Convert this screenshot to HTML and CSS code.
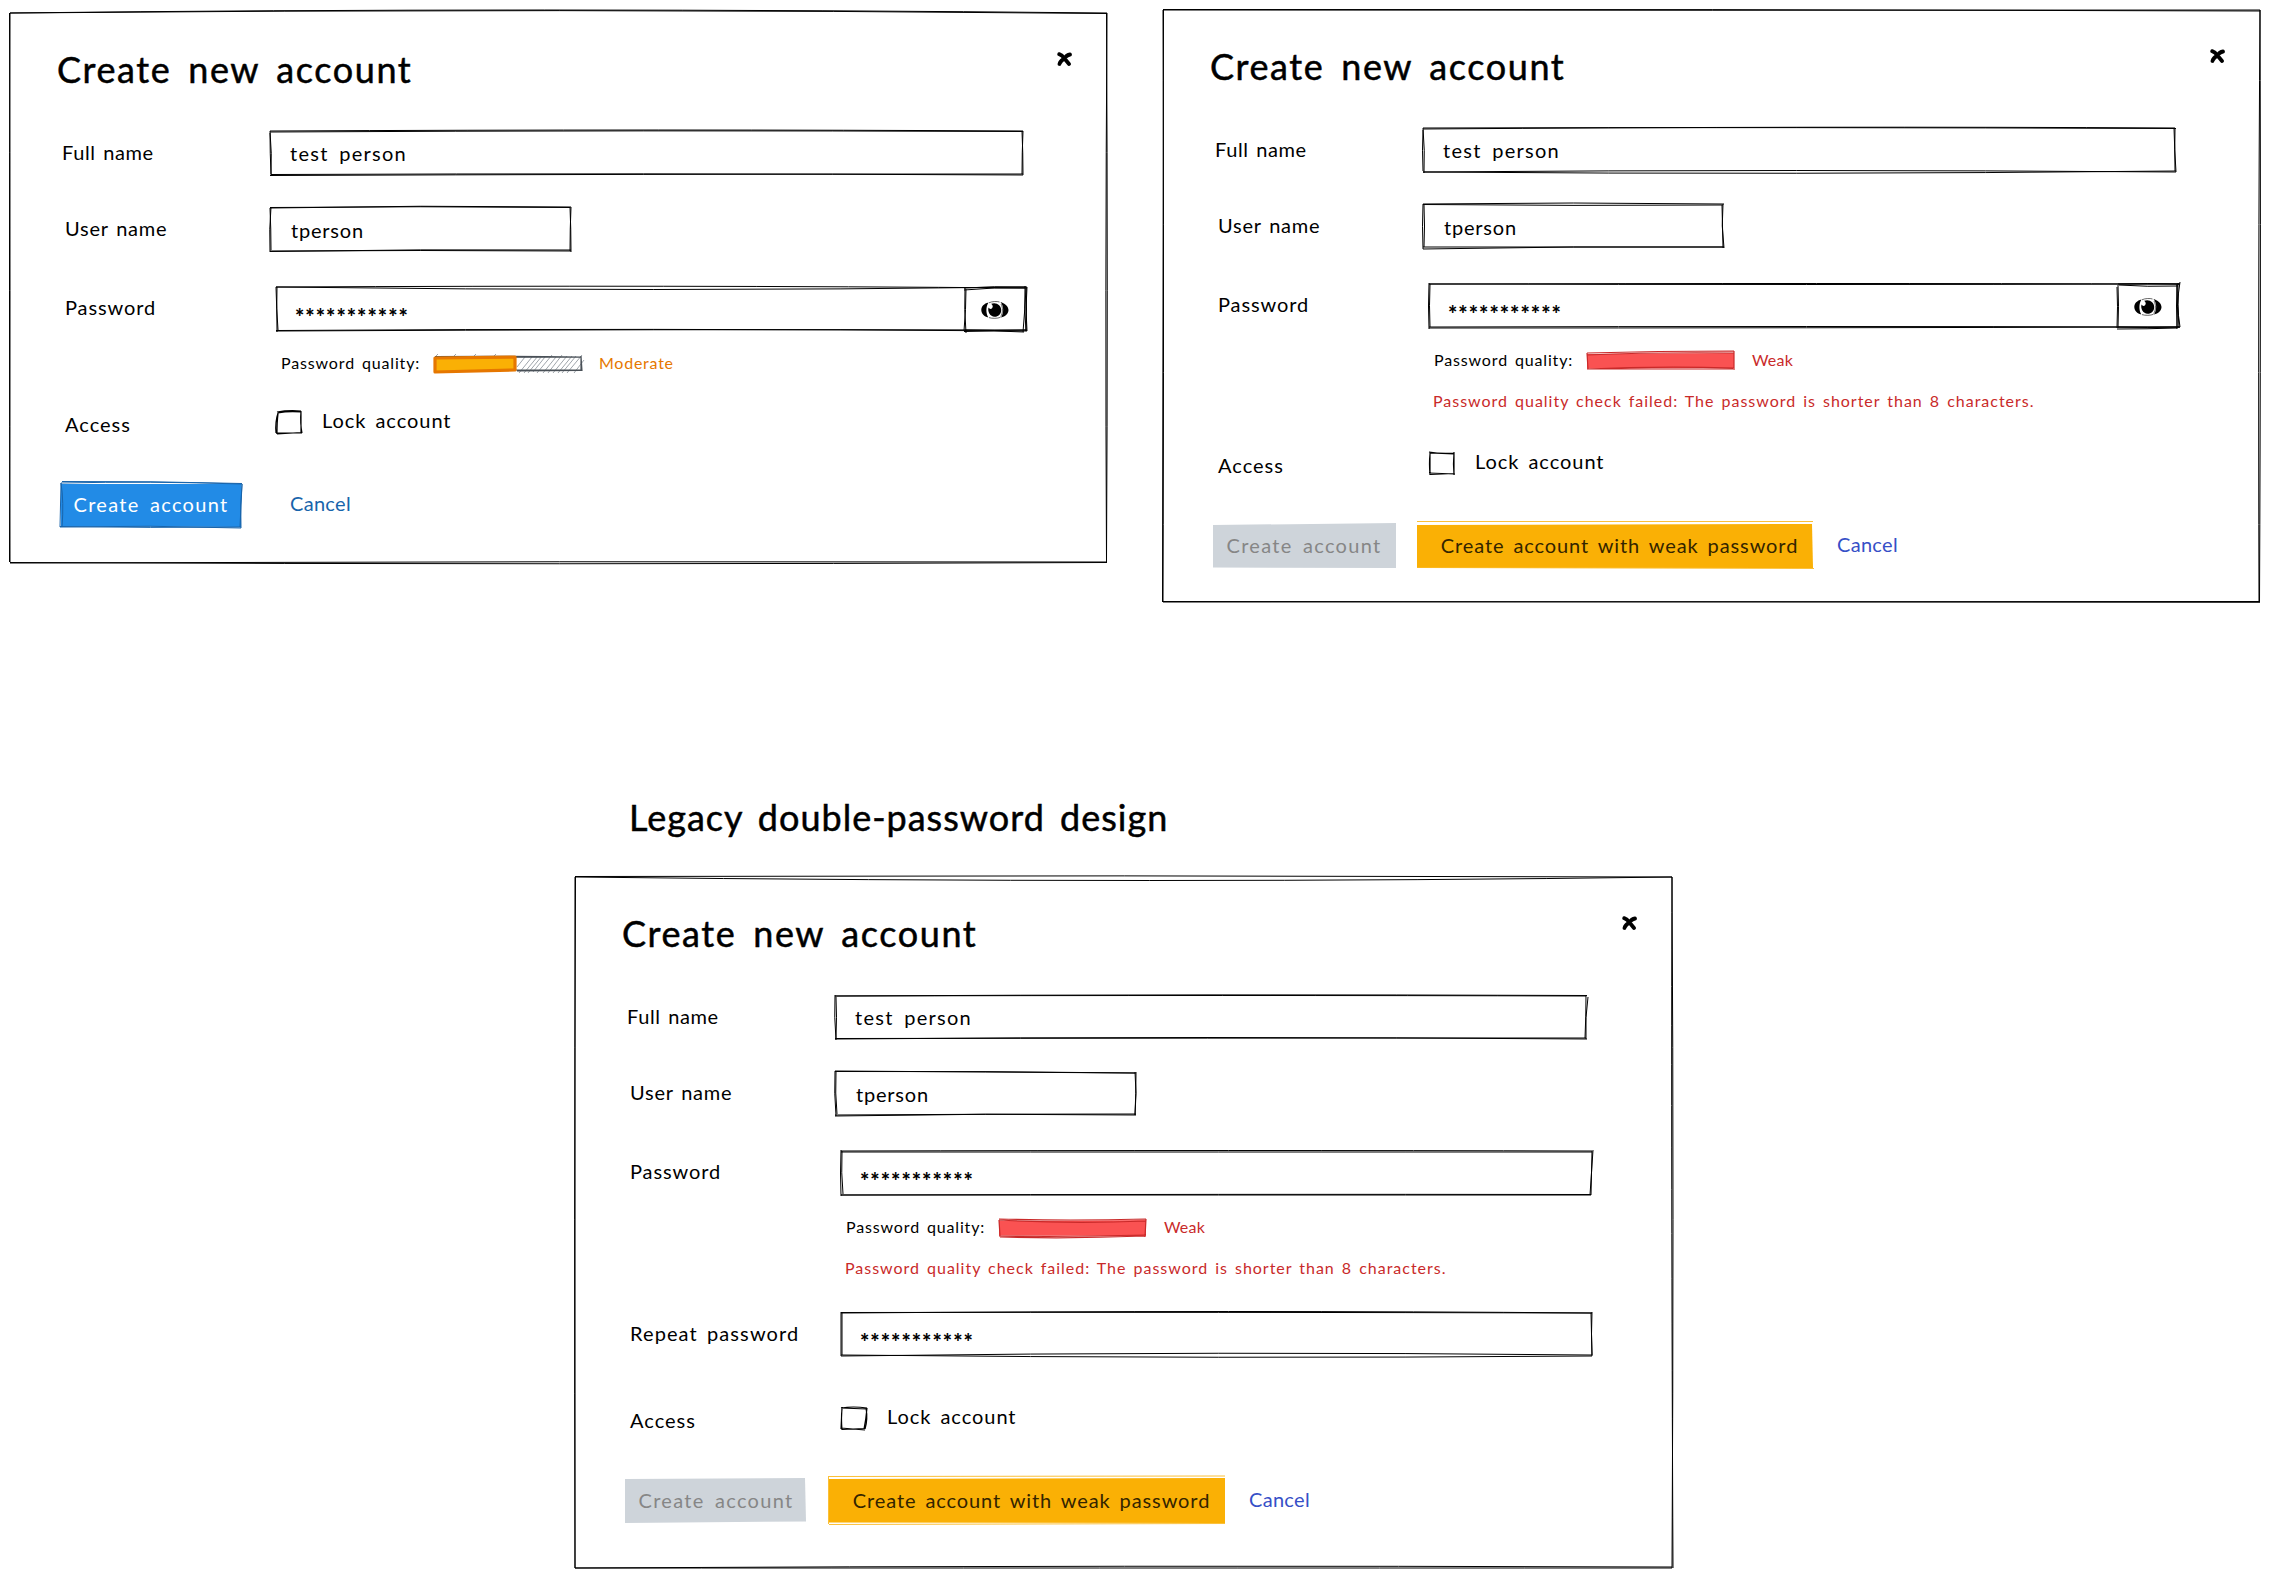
FILE: index.html
```html
<!DOCTYPE html>
<html lang="en">
<head>
<meta charset="utf-8">
<title>Create new account – wireframes</title>
<link rel="stylesheet" href="styles.css">
</head>
<body>
<svg class="defs" aria-hidden="true">
  <symbol id="eye" viewBox="0 0 28 18">
    <path d="M7.5 1.500C3 2.500 .3 5.500 .3 9s2.900 6.600 7 7.400C4.800 12.500 4.700 5.500 7.500 1.500Z"/>
    <path d="M19.500 1c3.800 1 8 4.300 8 8s-3.200 6.600-7.500 7.500c3-4.500 3-11.500-.5-15.500Z"/>
    <path d="M7.500 6.500C8.500 8 10 8.500 11.200 7c1.200-1.600.3-3-1-4.200C15 .8 20.300 4 20.200 9.300c0 4.200-3.400 6.700-6.700 6.500C9.300 15.500 6.300 11 7.500 6.500Z"/>
    <path class="thin" d="M8 1.800C11 .3 16 .2 18.500 1M8 16.600c3 1 8.500 1 11.500-.3M20 3c2 3.500 2 9-.3 12.500"/>
  </symbol>
  <symbol id="cross" viewBox="0 0 15 14">
    <path class="bold" d="M2.200 2.200Q5 3 7.500 6.500L12 12M13 2.500Q9.500 3 7.500 6.500Q3 9 2.500 12"/>
  </symbol>
</svg>
<main class="board">
  <div class="pair">
    <section class="dialog dialog-ok">
      <svg class="ink"><path d="M0 0Q550-5 1097 .5M0 0Q520-6 1097 0M1097 0Q1095 280 1096.500 549M1096.500 0Q1098 280 1096.500 549M1097 549Q550 548 0 550M1097 549.500Q550 552 0 549.500M0 549Q-1 280 0 0M-.5 549Q.5 280-.5 0"/></svg>
      <header class="head"><h1>Create new account</h1><svg class="close"><use href="#cross"/></svg></header>
      <div class="row"><span class="label full">Full name</span><div class="field"><svg class="ink"><path d="M0 0Q400-2 753 0M0 1Q370-1 753 .5M752 0Q753 22 753 44M753 0Q752 22 752 43M753 44Q370 42 1 43.500M753 43Q370 43 0 44.500M1 45Q2 22 0 0M1 43Q0 22 0 2"/></svg><span class="value person">test person</span></div></div>
      <div class="row user"><span class="label uname">User name</span><div class="field short"><svg class="ink"><path d="M0 1Q150-2 301 0M0 .5Q150-1 300 .5M300 0Q301 22 301 45M301 0Q300 22 300 44M301 43Q150 42 0 44.500M301 44Q150 43 0 44M0 45Q-1 22 1 0M1 43Q1 22 0 1"/></svg><span class="value tperson">tperson</span></div></div>
      <div class="row pass"><span class="label pword">Password</span><div class="field secret"><svg class="ink"><path d="M0 0Q400-2 751 1M0 0Q380 5 751 0M750 0Q751 22 750 44M751 0Q749 22 751 44M751 44Q380 41 0 43.500M751 43Q380 42 0 44M1 45Q1 22 0 0M2 43Q0 22 1 0"/></svg><span class="value stars">***********</span><span class="reveal"><svg class="ink"><path d="M0 1Q30-1 62 0M0 3Q30 0 61 1M61-1Q60 22 62 44M62 1Q61 22 59 45M62 43Q30 44 1 43M60 45Q30 43 0 44.500M2 46Q0 22 1 1M0 44Q2 22 2 2"/></svg><svg class="eye"><use href="#eye"/></svg></span></div></div>
      <div class="quality moderate"><span class="qlabel">Password quality:</span><span class="meter"><svg class="ink"><g class="hatch"><path d="M83 11l8-10M85 17l13-16M90 17l14-17M94 17l14-17M99 16l12-15M103 17l15-18M109 17l13-16M114 17l14-18M119 17l14-17M124 17l14-17M128 17l14-17M133 17l15-18M140 17l10-13M2 0l2-2M20 0l2-2M40 0l2-2M60 0l2-2"/></g><path class="slate" d="M1 .5Q80 0 147 1M82 1.500L147 1M147 0L148 15M147 1L147 15M148 14.500L83 15M147 14L80 14"/><path class="amber" d="M1 2L81 1L81 14L1 16Z"/></svg></span><span class="verdict">Moderate</span></div>
      <div class="row access"><span class="label acc">Access</span><label class="check"><span class="box"><svg class="ink"><path d="M1 1Q12-1 25 0M2 2Q12 0 25 1M25 0Q24 12 26 22M25 1Q25 12 25 22M26 22L0 22M25 21.500L1 23M0 22Q-1 11 2 2M1 23Q1 11 2 3"/></svg></span><span class="lock">Lock account</span></label></div>
      <div class="actions"><button class="btn create"><svg class="ink"><path class="fill" d="M1 2L181 2L181 45L1 44Z"/><path d="M2-.5Q90-1 182 1.500M1 1Q90-1 182 2M182 2Q180 22 181 46M182 2L180 45M181 46Q90 43 0 45M181 45Q90 46 0 44.500M2 45Q4 20 1 1M0 45L1 1"/></svg><span>Create account</span></button><a class="cancel">Cancel</a></div>
    </section>
    <section class="dialog dialog-weak">
      <svg class="ink"><path d="M0-.5Q550-1 1097 1M0 0Q550 .5 1097 0M1097 0Q1095 280 1096 592M1097 0Q1098 280 1096.500 592M1097 591.500L0 592M1097 592.300L0 591.500M0 592Q1 280 0 0M-.5 592L.500 0"/></svg>
      <header class="head"><h1>Create new account</h1><svg class="close"><use href="#cross"/></svg></header>
      <div class="row"><span class="label full">Full name</span><div class="field"><svg class="ink"><path d="M0 1Q400-2 752 0M0 0Q370-1 753 .5M752 0Q751 22 753 44M751 0Q752 22 752 43M753 44Q370 41 0 44M753 43Q370 47 0 44M1 45Q2 22 0 0M0 43Q-1 22 0 2"/></svg><span class="value person">test person</span></div></div>
      <div class="row user"><span class="label uname">User name</span><div class="field short"><svg class="ink"><path d="M0 0Q150-2 301 0M0 .5Q150 2 300 1M300 0Q298 22 301 44M299 1L300 44M301 43Q150 43 0 43M301 43Q150 42 0 45M0 45Q-1 22 0 0M1 43Q2 22 1 1"/></svg><span class="value tperson">tperson</span></div></div>
      <div class="row pass"><span class="label pword">Password</span><div class="field secret"><svg class="ink"><path d="M0 0Q400-1 751 0M0 0Q380 1 751 0M748 0Q747 22 748 44M751-2Q747 20 751 43M751 43Q380 42 0 43M751 43Q380 44 0 44M0 45Q-1 22 0-1M1 43Q0 22 1 0"/></svg><span class="value stars">***********</span><span class="reveal"><svg class="ink"><path d="M1 0Q30-1 62 0M2 1Q30 3 61 2M61-1Q60 22 62 44M60 1Q61 22 60 45M62 43Q30 44 1 43M60 44Q30 45 0 45M0 44Q1 22 0 3M1 44Q2 22 1 1"/></svg><svg class="eye"><use href="#eye"/></svg></span></div></div>
      <div class="quality weak"><span class="qlabel">Password quality:</span><span class="meter"><svg class="ink"><path class="red" d="M0 1L147 0L147 15L0 15.500Z"/><path class="redline" d="M0 0Q70-2 147-2M0 2Q70-1 147 0M147-2L147 17M0 0L1 16M0 16Q70 13 147 15M1 16L146 16"/></svg></span><span class="verdict">Weak</span></div>
      <p class="error">Password quality check failed: The password is shorter than 8 characters.</p>
      <div class="row access"><span class="label acc">Access</span><label class="check"><span class="box"><svg class="ink"><path d="M0 0Q12 2 25 1M1 1L25 2M25 0Q24 12 25 23M25 1L25 22M26 22L0 21M25 21.500L1 22.500M1 23Q0 11 1 2M1 22L1 0"/></svg></span><span class="lock">Lock account</span></label></div>
      <div class="actions"><button class="btn create off"><svg class="ink"><path class="fill" d="M0 2L183 0L183 45L0 44.500Z"/></svg><span>Create account</span></button><button class="btn risky"><svg class="ink"><path class="fill" d="M0 2L395 1L396 45L0 44.500Z"/><path class="gold" d="M0-1.500L396-1.500M0 44.500L397 45.500"/></svg><span>Create account with weak password</span></button><a class="cancel">Cancel</a></div>
    </section>
  </div>
  <div class="legacy">
    <h2>Legacy double-password design</h2>
    <section class="dialog dialog-legacy">
      <svg class="ink"><path d="M0-.5Q550-2 1097 0M0 0Q600 7 1097 0M1097 0Q1096 280 1098 691M1097 0Q1099 340 1097 691M1097 690Q550 688 0 691M1097 691Q500 691 0 691M0 691Q-1 340 .5 0M0 691L0 0"/></svg>
      <header class="head"><h1>Create new account</h1><svg class="close"><use href="#cross"/></svg></header>
      <div class="row"><span class="label full">Full name</span><div class="field"><svg class="ink"><path d="M0 1Q400 0 751 1M0 1Q370-1 752 .5M753 2Q750 22 751 44M751 0Q751 22 750 43M752 44Q370 41 0 44M751 43Q370 43 0 43.500M1 45Q-1 22 0 0M1 43Q2 22 1 2"/></svg><span class="value person">test person</span></div></div>
      <div class="row user"><span class="label uname">User name</span><div class="field short"><svg class="ink"><path d="M0 0Q150 1 301 2M0 .5Q150 0 300 2M301 1Q301 22 300 44M300 1Q302 22 300 44M301 43Q150 43 0 44M301 44Q150 42 0 45M1 45Q-1 22 0 0M2 43Q0 22 1 1"/></svg><span class="value tperson">tperson</span></div></div>
      <div class="row pass"><span class="label pword">Password</span><div class="field secret"><svg class="ink"><path d="M0 0Q400-1 751 0M0 1Q380 1 751 1M752-1L749 44M751 0L750 44M750 43.500Q380 43 0 44M750 44Q380 44 0 44M0 45Q-1 22 0-1M2 43Q0 22 1 0"/></svg><span class="value stars">***********</span></div></div>
      <div class="quality weak"><span class="qlabel">Password quality:</span><span class="meter"><svg class="ink"><path class="red" d="M0 1L147 0L147 16L0 15.500Z"/><path class="redline" d="M0-1Q70 1 147-1M0 0Q70 4 147 1M147-1L146 17M0 0L1 16M0 16Q70 17 147 15M1 17Q70 19 146 16"/></svg></span><span class="verdict">Weak</span></div>
      <p class="error">Password quality check failed: The password is shorter than 8 characters.</p>
      <div class="row repeat"><span class="label rep">Repeat password</span><div class="field secret"><svg class="ink"><path d="M0 1Q400-2 751 1M0 .5Q380 0 751 1M751 0Q750 22 751 44M750 1L751 43M751 43Q380 39 0 44M751 44Q380 47 0 43M0 44L0 0M1 43L1 1"/></svg><span class="value stars">***********</span></div></div>
      <div class="row access"><span class="label acc">Access</span><label class="check"><span class="box"><svg class="ink"><path d="M0 1Q12-1 26 1M0 1L26 2M26 1Q25 12 23 22M25 1Q27 12 24 22M24 23L0 21M23 21.500L1 22.500M1 23Q0 11 1 2M0 22L1 0"/></svg></span><span class="lock">Lock account</span></label></div>
      <div class="actions"><button class="btn create off"><svg class="ink"><path class="fill" d="M0 1L180 0L181 43.500L0 45Z"/></svg><span>Create account</span></button><button class="btn risky"><svg class="ink"><path class="fill" d="M0 1L396 0L396 45L0 44.500Z"/><path class="gold" d="M-1-1.500L396-2M0 46.500L396 45.500M-.5-1L-.5 46"/></svg><span>Create account with weak password</span></button><a class="cancel">Cancel</a></div>
    </section>
  </div>
</main>
</body>
</html>
```

FILE: styles.css
```css
* { box-sizing: border-box; }
body {
  margin: 0;
  width: 2270px;
  height: 1578px;
  background: #fff;
  color: #000;
  font: 20px/42px Lato, "Open Sans", sans-serif;
  overflow: hidden;
}
.defs { position: absolute; width: 0; height: 0; }
.board { display: flex; flex-direction: column; height: 100%; }
.pair { display: flex; gap: 56px; height: 798px; padding: 10px 0 0 10px; align-items: flex-start; }
.dialog { position: relative; width: 1097px; flex: none; }
.dialog-ok { margin-top: 3px; height: 549px; }
.dialog-weak { height: 592px; }
.dialog-legacy { height: 691px; }
.legacy { padding-left: 575px; }

/* Hand-drawn outline laid over its box */
.ink { position: absolute; inset: 0; width: 100%; height: 100%; overflow: visible; fill: none; stroke: #000; stroke-width: 1px; pointer-events: none; }

h1, h2 { margin: 0; font-size: 36px; font-weight: 400; letter-spacing: 1.6px; word-spacing: 6px; -webkit-text-stroke: .5px; white-space: nowrap; }
h2 { height: 79px; line-height: 42px; padding: 0 0 0 54px; margin-top: -2px; margin-bottom: 2px; letter-spacing: 1px; word-spacing: 5px; }
.head { display: flex; justify-content: space-between; height: 118px; padding: 36px 35px 0 47px; }
.head h1 { line-height: 40px; }
.close { width: 15px; height: 14px; margin-top: 3px; overflow: visible; }
.bold { fill: none; stroke: #000; stroke-width: 3.8px; stroke-linecap: round; }
.thin { fill: none; stroke: #000; stroke-width: .6px; }

.row { display: flex; height: 44px; }
.user { margin-top: 32px; }
.pass { margin-top: 36px; }
.label { width: 260px; padding-left: 52px; line-height: 42px; letter-spacing: .6px; word-spacing: 2px; white-space: nowrap; }
.uname, .pword, .rep, .acc { padding-left: 55px; }
.uname { line-height: 43px; letter-spacing: .75px; }
.pword { line-height: 40px; letter-spacing: .9px; }
.rep { letter-spacing: 1.1px; word-spacing: 3px; }
.acc { letter-spacing: 1px; }
.field { position: relative; width: 753px; height: 44px; padding-left: 20px; }
.short { width: 301px; }
.secret { width: 751px; margin-left: 6px; padding-left: 18px; }
.value { display: block; line-height: 44px; letter-spacing: 1.3px; word-spacing: 4px; }
.tperson { letter-spacing: .8px; padding-left: 1px; line-height: 46px; }
.stars { padding-left: 1px; font-size: 22px; font-weight: 900; line-height: 60px; letter-spacing: 1px; }
.reveal { position: absolute; right: 1px; top: 0; width: 62px; height: 44px; display: grid; place-items: center; }
.eye { width: 28px; height: 18px; margin-top: 1px; }

.quality { display: flex; align-items: center; height: 17px; margin: 24px 0 0 271px; font-size: 16px; line-height: 15px; white-space: nowrap; }
.qlabel, .verdict { height: 17px; }
.qlabel { width: 153px; letter-spacing: .85px; word-spacing: 2px; }
.meter { position: relative; width: 147px; height: 15px; }
.verdict { margin-left: 18px; letter-spacing: .75px; }
.weak .verdict { letter-spacing: .2px; }
.moderate .verdict { color: #e67700; }
.weak .verdict, .error { color: #c92a2a; }
.hatch path { stroke: #868e96; stroke-width: .8px; }
.slate { stroke: #495057; stroke-width: 1.2px; }
.amber { fill: #fab005; stroke: #e67700; stroke-width: 3.2px; stroke-linejoin: round; }
.red { fill: #fa5252; stroke: none; }
.redline { stroke: #c92a2a; stroke-width: 1.2px; }
.error { margin: 22px 0 1px 270px; height: 20px; font-size: 16px; line-height: 20px; letter-spacing: .98px; word-spacing: 2px; white-space: nowrap; }

.repeat { margin-top: 34px; }
.access { height: 24px; margin-top: 39px; }
.dialog-weak .access { margin-top: 41px; }
.dialog-legacy .access { margin-top: 51px; }
.access .label { width: 266px; line-height: 26px; }
.check { display: flex; line-height: 18px; }
.box { position: relative; width: 26px; height: 23px; }
.box .ink { stroke-width: 1.2px; }
.lock { margin-left: 20px; letter-spacing: .95px; word-spacing: 3px; }

.actions { display: flex; height: 46px; margin: 47px 0 0 50px; white-space: nowrap; }
.btn { position: relative; border: 0; padding: 0; background: none; font: inherit; line-height: 41px; height: 46px; letter-spacing: 1.3px; word-spacing: 4px; }
.btn span { position: relative; display: block; margin-top: -1px; }
.create { width: 182px; color: #fff; }
.create .ink { stroke: #1864ab; stroke-width: 1px; }
.create .fill { fill: #228be6; stroke: none; }
.create.off { color: #868686; }
.create.off .fill { fill: #ced4da; }
.risky { width: 397px; margin-left: 22px; padding-left: 8px; color: #332400; letter-spacing: .9px; word-spacing: 3px; }
.risky .fill { fill: #fab005; stroke: none; }
.risky .gold { stroke: #fab005; stroke-width: .8px; }
.cancel { margin-left: 23px; line-height: 42px; letter-spacing: .3px; color: #364fc7; }
.dialog-ok .cancel { margin-left: 48px; color: #1864ab; }
```
